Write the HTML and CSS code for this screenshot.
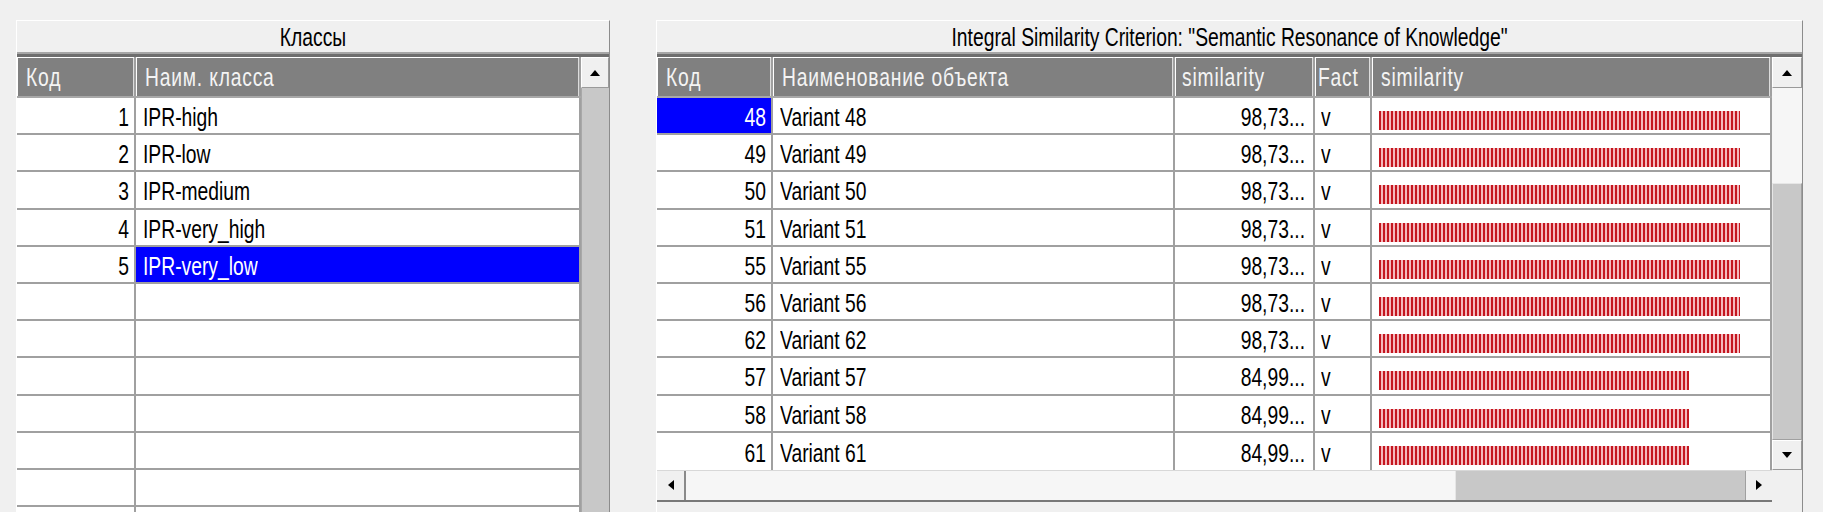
FILE: index.html
```html
<!DOCTYPE html>
<html lang="ru">
<head>
<meta charset="utf-8">
<title>Классы</title>
<link rel="stylesheet" href="styles.css">
</head>
<body>
<div class="screen">
  <section class="panel panel-left">
    <div class="title"><span class="t">Классы</span></div>
    <div class="band"></div>
    <div class="pbody">
      <div class="grid">
        <div class="head">
          <div class="h l-code"><span class="t">Код</span></div>
          <div class="h l-name"><span class="t">Наим. класса</span></div>
        </div>
        <div class="row"><div class="c l-code num"><span class="t">1</span></div><div class="c l-name"><span class="t">IPR-high</span></div></div>
        <div class="row"><div class="c l-code num"><span class="t">2</span></div><div class="c l-name"><span class="t">IPR-low</span></div></div>
        <div class="row"><div class="c l-code num"><span class="t">3</span></div><div class="c l-name"><span class="t">IPR-medium</span></div></div>
        <div class="row"><div class="c l-code num"><span class="t">4</span></div><div class="c l-name"><span class="t">IPR-very_high</span></div></div>
        <div class="row"><div class="c l-code num"><span class="t">5</span></div><div class="c l-name sel"><span class="t">IPR-very_low</span></div></div>
        <div class="row"><div class="c l-code"></div><div class="c l-name"></div></div>
        <div class="row"><div class="c l-code"></div><div class="c l-name"></div></div>
        <div class="row"><div class="c l-code"></div><div class="c l-name"></div></div>
        <div class="row"><div class="c l-code"></div><div class="c l-name"></div></div>
        <div class="row"><div class="c l-code"></div><div class="c l-name"></div></div>
        <div class="row"><div class="c l-code"></div><div class="c l-name"></div></div>
        <div class="row"><div class="c l-code"></div><div class="c l-name"></div></div>
      </div>
      <div class="vscroll vscroll-left">
        <div class="sbtn up"><svg width="10" height="6" viewBox="0 0 10 6"><polygon points="5,0 10,6 0,6" fill="#000"/></svg></div>
        <div class="thumb-fill"></div>
      </div>
    </div>
  </section>

  <section class="panel panel-right">
    <div class="title"><span class="t">Integral Similarity Criterion: "Semantic Resonance of Knowledge"</span></div>
    <div class="band"></div>
    <div class="pbody">
      <div class="gridcol">
        <div class="grid">
          <div class="head">
            <div class="h r-code"><span class="t">Код</span></div>
            <div class="h r-name"><span class="t">Наименование объекта</span></div>
            <div class="h r-sim"><span class="t">similarity</span></div>
            <div class="h r-fact"><span class="t">Fact</span></div>
            <div class="h r-bar"><span class="t">similarity</span></div>
          </div>
          <div class="row"><div class="c r-code num sel"><span class="t">48</span></div><div class="c r-name"><span class="t">Variant 48</span></div><div class="c r-sim num"><span class="t">98,73...</span></div><div class="c r-fact"><span class="t">v</span></div><div class="c r-bar"><div class="bar" style="width:361px"></div></div></div>
          <div class="row"><div class="c r-code num"><span class="t">49</span></div><div class="c r-name"><span class="t">Variant 49</span></div><div class="c r-sim num"><span class="t">98,73...</span></div><div class="c r-fact"><span class="t">v</span></div><div class="c r-bar"><div class="bar" style="width:361px"></div></div></div>
          <div class="row"><div class="c r-code num"><span class="t">50</span></div><div class="c r-name"><span class="t">Variant 50</span></div><div class="c r-sim num"><span class="t">98,73...</span></div><div class="c r-fact"><span class="t">v</span></div><div class="c r-bar"><div class="bar" style="width:361px"></div></div></div>
          <div class="row"><div class="c r-code num"><span class="t">51</span></div><div class="c r-name"><span class="t">Variant 51</span></div><div class="c r-sim num"><span class="t">98,73...</span></div><div class="c r-fact"><span class="t">v</span></div><div class="c r-bar"><div class="bar" style="width:361px"></div></div></div>
          <div class="row"><div class="c r-code num"><span class="t">55</span></div><div class="c r-name"><span class="t">Variant 55</span></div><div class="c r-sim num"><span class="t">98,73...</span></div><div class="c r-fact"><span class="t">v</span></div><div class="c r-bar"><div class="bar" style="width:361px"></div></div></div>
          <div class="row"><div class="c r-code num"><span class="t">56</span></div><div class="c r-name"><span class="t">Variant 56</span></div><div class="c r-sim num"><span class="t">98,73...</span></div><div class="c r-fact"><span class="t">v</span></div><div class="c r-bar"><div class="bar" style="width:361px"></div></div></div>
          <div class="row"><div class="c r-code num"><span class="t">62</span></div><div class="c r-name"><span class="t">Variant 62</span></div><div class="c r-sim num"><span class="t">98,73...</span></div><div class="c r-fact"><span class="t">v</span></div><div class="c r-bar"><div class="bar" style="width:361px"></div></div></div>
          <div class="row"><div class="c r-code num"><span class="t">57</span></div><div class="c r-name"><span class="t">Variant 57</span></div><div class="c r-sim num"><span class="t">84,99...</span></div><div class="c r-fact"><span class="t">v</span></div><div class="c r-bar"><div class="bar" style="width:310px"></div></div></div>
          <div class="row"><div class="c r-code num"><span class="t">58</span></div><div class="c r-name"><span class="t">Variant 58</span></div><div class="c r-sim num"><span class="t">84,99...</span></div><div class="c r-fact"><span class="t">v</span></div><div class="c r-bar"><div class="bar" style="width:310px"></div></div></div>
          <div class="row last"><div class="c r-code num"><span class="t">61</span></div><div class="c r-name"><span class="t">Variant 61</span></div><div class="c r-sim num"><span class="t">84,99...</span></div><div class="c r-fact"><span class="t">v</span></div><div class="c r-bar"><div class="bar" style="width:310px"></div></div></div>
        </div>
        <div class="hscroll">
          <div class="hbtn left"><svg width="6" height="10" viewBox="0 0 6 10"><polygon points="0,5 6,0 6,10" fill="#000"/></svg></div>
          <div class="htrack"></div>
          <div class="hthumb"></div>
          <div class="hbtn right"><svg width="6" height="10" viewBox="0 0 6 10"><polygon points="6,5 0,0 0,10" fill="#000"/></svg></div>
        </div>
      </div>
      <div class="vscroll vscroll-right">
        <div class="sbtn up"><svg width="10" height="6" viewBox="0 0 10 6"><polygon points="5,0 10,6 0,6" fill="#000"/></svg></div>
        <div class="vtrack"></div>
        <div class="vthumb"></div>
        <div class="sbtn down"><svg width="10" height="6" viewBox="0 0 10 6"><polygon points="0,0 10,0 5,6" fill="#000"/></svg></div>
        <div class="corner"></div>
      </div>
    </div>
  </section>
</div>
</body>
</html>
```

FILE: styles.css
```css
html, body {
  margin: 0;
  padding: 0;
  background: #f0f0f0;
  width: 1823px;
  height: 512px;
  overflow: hidden;
  font-family: "Liberation Sans", Arial, sans-serif;
  font-size: 19.3px;
  color: #000;
}

.screen {
  display: flex;
  gap: 46px;
  padding: 20px 0 0 16px;
}

.panel {
  box-sizing: border-box;
  height: 492px;
  border-top: 1px solid #ffffff;
  border-left: 1px solid #ffffff;
  border-right: 1px solid #8c8c8c;
  overflow: hidden;
  display: flex;
  flex-direction: column;
}

.panel-left { width: 594px; }
.panel-right { width: 1147px; }

.t {
  display: inline-block;
  transform: scaleY(1.35);
  white-space: nowrap;
}

.title {
  height: 31px;
  flex-shrink: 0;
  display: flex;
  align-items: center;
  justify-content: center;
  padding-top: 3px;
  box-sizing: border-box;
}

.band {
  height: 5px;
  flex-shrink: 0;
  box-sizing: border-box;
  border-top: 2px solid #a6a6a6;
  background: #6e6e6e;
}

.pbody {
  display: flex;
  flex: 1;
  min-height: 0;
  overflow: hidden;
}

.gridcol {
  display: flex;
  flex-direction: column;
}

.grid {
  display: flex;
  flex-direction: column;
  background: #ffffff;
}

.head {
  display: flex;
  flex-shrink: 0;
  height: 41px;
  box-sizing: border-box;
  background: #808080;
  border-bottom: 2px solid #a8a8a8;
}

.h {
  box-sizing: border-box;
  display: flex;
  align-items: center;
  padding: 3px 0 0 9px;
  color: #f4f4f4;
  letter-spacing: 0.8px;
  border-right: 2px solid #a0a0a0;
  box-shadow: inset 1px 1px 0 #ffffff, inset -1px 0 0 #dcdcdc;
  overflow: hidden;
  white-space: nowrap;
}

.row {
  display: flex;
  flex-shrink: 0;
  height: 37.2px;
  box-sizing: border-box;
  border-bottom: 2px solid #a0a0a0;
}

.row.last { border-bottom: none; }

.c {
  box-sizing: border-box;
  display: flex;
  align-items: center;
  padding: 5px 0 0 7px;
  border-right: 2px solid #a0a0a0;
  overflow: hidden;
  white-space: nowrap;
  background: #ffffff;
}

.c.num {
  justify-content: flex-end;
  padding-left: 0;
  padding-right: 5px;
}

.c.r-sim.num { padding-right: 8px; }

.c.sel {
  background: #0000ff;
  color: #ffffff;
}

.l-code { width: 119px; }
.l-name { width: 445px; }

.r-code { width: 116px; }
.r-name { width: 402px; }
.r-sim { width: 140px; }
.r-fact { width: 57px; }
.r-bar { width: 400px; }

.h.r-fact { padding-left: 3px; }
.h.r-sim { padding-left: 7px; }
.c.r-fact { padding-left: 6px; }

.c.r-bar {
  align-items: flex-start;
  padding: 13px 0 0 7px;
}

.bar {
  height: 19px;
  background: repeating-linear-gradient(90deg, #c4161f 0, #c4161f 2.5px, #f4b8bc 2.5px, #f4b8bc 4px);
}

/* vertical scrollbars */
.vscroll {
  display: flex;
  flex-direction: column;
  box-sizing: border-box;
}

.vscroll-left { width: 28px; }
.vscroll-right { width: 30px; }

.sbtn {
  height: 31px;
  flex-shrink: 0;
  box-sizing: border-box;
  display: flex;
  align-items: center;
  justify-content: center;
  background: #f0f0f0;
  border-right: 1px solid #9a9a9a;
  border-bottom: 1px solid #9a9a9a;
  border-left: 1px solid #ffffff;
  border-top: 1px solid #ffffff;
}

.sbtn.down { height: 30px; }

.thumb-fill {
  flex: 1;
  background: #c8c8c8;
  border-left: 1px solid #a8a8a8;
}

.vtrack {
  height: 95px;
  flex-shrink: 0;
  background: #f6f6f6;
}

.vthumb {
  height: 257px;
  flex-shrink: 0;
  box-sizing: border-box;
  background: #c8c8c8;
  border: 1px solid #e6e6e6;
  border-right-color: #a0a0a0;
  border-bottom-color: #a0a0a0;
}

.corner {
  height: 30px;
  flex-shrink: 0;
  background: #f0f0f0;
}

/* horizontal scrollbar */
.hscroll {
  display: flex;
  flex-shrink: 0;
  height: 32px;
  box-sizing: border-box;
  border-top: 1px solid #d8d8d8;
  border-bottom: 2px solid #787878;
}

.hbtn {
  display: flex;
  align-items: center;
  justify-content: center;
  background: #f0f0f0;
  box-sizing: border-box;
}

.hbtn.left {
  width: 29px;
  border-right: 2px solid #8a8a8a;
}

.hbtn.right {
  width: 27px;
  border-left: 1px solid #a0a0a0;
}

.htrack {
  width: 769px;
  background: #f6f6f6;
}

.hthumb {
  width: 290px;
  background: #c8c8c8;
  box-sizing: border-box;
  border-left: 1px solid #e6e6e6;
}
```
